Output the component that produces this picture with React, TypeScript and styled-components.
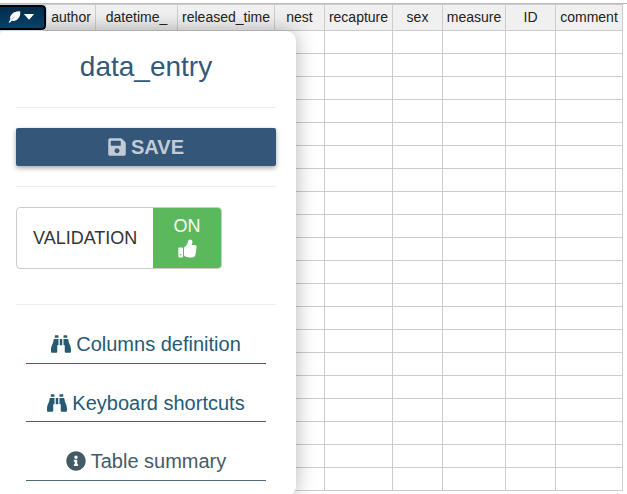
import React from "react";
import styled, { createGlobalStyle } from "styled-components";
import { FaSave, FaInfoCircle, FaBinoculars } from "react-icons/fa";

const GlobalStyle = createGlobalStyle`
  *, *::before, *::after { box-sizing: border-box; }
  html, body { margin: 0; background: #fff; overflow: hidden; }
  body { font-family: "Liberation Sans", Arial, Helvetica, sans-serif; color: #333; }
`;

const Page = styled.div`
  position: relative;
  width: 627px;
  height: 494px;
  overflow: hidden;
  padding-top: 3px;
  background: #fff;
`;

const SheetFrame = styled.div`
  border-top: 1px solid #bbb;
`;

const Sheet = styled.table`
  width: 623px;
  table-layout: fixed;
  border-collapse: separate;
  border-spacing: 0;
`;

const HeadCell = styled.th`
  height: 27px;
  padding: 0;
  border-top: 1px solid #ccc;
  border-right: 1px solid #ccc;
  border-bottom: 1px solid #ccc;
  background: #f0f0f0;
  color: #222;
  font-size: 14px;
  font-weight: 400;
  line-height: 21px;
  text-align: center;
  vertical-align: middle;
  white-space: nowrap;
  &:nth-child(-n + 3) { background: linear-gradient(#f0f0f0 40%, #e9e9e9); }
  &:nth-child(2) { padding-left: 1px; }
`;

const Cell = styled.td`
  height: 23px;
  padding: 0;
  border-right: 1px solid #ccc;
  border-bottom: 1px solid #ccc;
  background: #fff;
`;

const MenuButton = styled.button`
  position: absolute;
  z-index: 3;
  top: 5px;
  left: -4px;
  display: flex;
  align-items: center;
  width: 50px;
  height: 25px;
  padding: 0 0 1px 10px;
  gap: 2px;
  border: 2px solid #000;
  border-radius: 4px;
  outline: 1px solid #c9d3db;
  background: linear-gradient(#002c4c, #0b4165);
  color: #fff;
`;

const CaretIcon = styled.svg`
  display: block;
  margin-top: -1px;
`;

const Panel = styled.aside`
  position: absolute;
  z-index: 2;
  top: 31px;
  left: 0;
  width: 296px;
  height: 465px;
  padding: 19px 20px 0 16px;
  border-radius: 4px 10px 10px 0;
  background: #fff;
  box-shadow: 0 0 20px rgba(0, 0, 0, 0.3);
`;

const Title = styled.h2`
  margin: 0;
  height: 57px;
  color: #34587b;
  font-size: 28px;
  font-weight: 400;
  line-height: 34px;
  text-align: center;
`;

const Divider = styled.hr`
  height: 1px;
  margin: 0;
  border: 0;
  background: #eee;
`;

const SaveButton = styled.button`
  display: flex;
  align-items: center;
  justify-content: center;
  gap: 4px;
  width: 260px;
  height: 38px;
  margin: 20px 0;
  padding: 0 1px 0 0;
  border: 0;
  border-radius: 2px;
  background: #345678;
  box-shadow: 0 2px 5px rgba(0, 0, 0, 0.36);
  color: #c2ccd6;
  font: bold 20px/24px "Liberation Sans", Arial, sans-serif;
`;

const Toggle = styled.div`
  display: flex;
  width: 206px;
  height: 62px;
  margin: 20px 0 35px;
  overflow: hidden;
  border: 1px solid #ccc;
  border-radius: 4px;
  font-size: 18px;
`;

const ToggleLabel = styled.span`
  display: flex;
  align-items: center;
  width: 136px;
  padding-left: 16px;
  color: #333;
`;

const ToggleState = styled.span`
  display: flex;
  flex: 1;
  flex-direction: column;
  align-items: center;
  padding-top: 6px;
  background: #5cb85c;
  color: #fff;
  line-height: 24px;
  svg { margin-top: 1px; }
`;

const Links = styled.nav`
  display: flex;
  flex-direction: column;
  padding: 0 10px;
`;

const PanelLink = styled.a<{ $color: string; $line: string; $height: number; $drop?: number }>`
  display: flex;
  align-items: flex-end;
  justify-content: center;
  gap: 5px;
  height: ${(p) => p.$height}px;
  padding-bottom: ${(p) => 7 - (p.$drop ?? 0)}px;
  border-bottom: 1px solid ${(p) => p.$line};
  color: ${(p) => p.$color};
  font-size: 20px;
  line-height: 23px;
  text-decoration: none;
  white-space: nowrap;
  svg { margin-bottom: 2px; }
`;

const FeatherIcon = () => (
  <svg width="13" height="12" viewBox="0 0 13 12" aria-hidden="true">
    <path
      d="M12 .3C9-.1 5.900 1 4 3 2.200 4.900 1.700 6.800 2.400 8.600L.5 11.500h1.600l1.500-1.700c3 .5 5.200-.5 6.700-2.400C11.900 5.400 12.700 2.900 12 .3Z"
      fill="currentColor"
    />
    <path d="M3.600 8.600 6.500 5.600" stroke="#093656" strokeWidth=".35" />
  </svg>
);

const ThumbIcon = () => (
  <svg width="19" height="19" viewBox="0 0 19 19" fill="currentColor" aria-hidden="true">
    <path
      fillRule="evenodd"
      d="M1.400 8.600h2.400c.8 0 1.200.5 1.200 1.200v7.400c0 .8-.4 1.300-1.200 1.300H1.500C.8 18.500.4 18 .4 17.200V9.800c0-.7.3-1.200 1-1.200ZM2.800 15a.8.8 0 1 0 0 1.600.8.8 0 0 0 0-1.600Z"
    />
    <path d="M6 9.200c0-1 .7-1.500 1.700-2.200C9 5.900 9.500 4.500 10 2.500c.3-1.400.9-2.100 2-2.100 1.600 0 2.500 1.100 2.400 2.800 0 1-.4 1.900-.8 2.900h2.900c1.600 0 2.300 1 2.100 2.300l-1.100 7.200c-.4 1.800-1.100 2.700-2.600 2.900h-3.700c-2 0-3.200-.5-4.300-1.200C6.300 17 6 16.700 6 16Z" />
  </svg>
);

const columns: [string, number][] = [
  ["", 46], ["author", 50], ["datetime_", 82], ["released_time", 97], ["nest", 50],
  ["recapture", 68], ["sex", 50], ["measure", 63], ["ID", 50], ["comment", 67],
];

export default function App() {
  return (
    <Page>
      <GlobalStyle />
      <SheetFrame>
        <Sheet>
          <colgroup>
            {columns.map(([name, width]) => <col key={name} width={width} />)}
          </colgroup>
          <thead>
            <tr>{columns.map(([name]) => <HeadCell key={name}>{name}</HeadCell>)}</tr>
          </thead>
          <tbody>
            {Array.from({ length: 20 }, (_, row) => (
              <tr key={row}>{columns.map(([name]) => <Cell key={name} />)}</tr>
            ))}
          </tbody>
        </Sheet>
      </SheetFrame>
      <MenuButton aria-label="Menu">
        <FeatherIcon />
        <CaretIcon width="12" height="6" viewBox="0 0 12 6" aria-hidden="true">
          <path d="M.8 0h10.400L6 5.800Z" fill="currentColor" />
        </CaretIcon>
      </MenuButton>
      <Panel>
        <Title>data_entry</Title>
        <Divider />
        <SaveButton><FaSave size={20} />SAVE</SaveButton>
        <Divider />
        <Toggle>
          <ToggleLabel>VALIDATION</ToggleLabel>
          <ToggleState>ON<ThumbIcon /></ToggleState>
        </Toggle>
        <Divider />
        <Links>
          <PanelLink $color="#265a73" $line="#376873" $height={59}><FaBinoculars size={20} />Columns definition</PanelLink>
          <PanelLink $color="#265a73" $line="#34687e" $height={58} $drop={1}><FaBinoculars size={20} />Keyboard shortcuts</PanelLink>
          <PanelLink $color="#455a68" $line="#4f6c7b" $height={59}><FaInfoCircle size={20} />Table summary</PanelLink>
        </Links>
      </Panel>
    </Page>
  );
}
